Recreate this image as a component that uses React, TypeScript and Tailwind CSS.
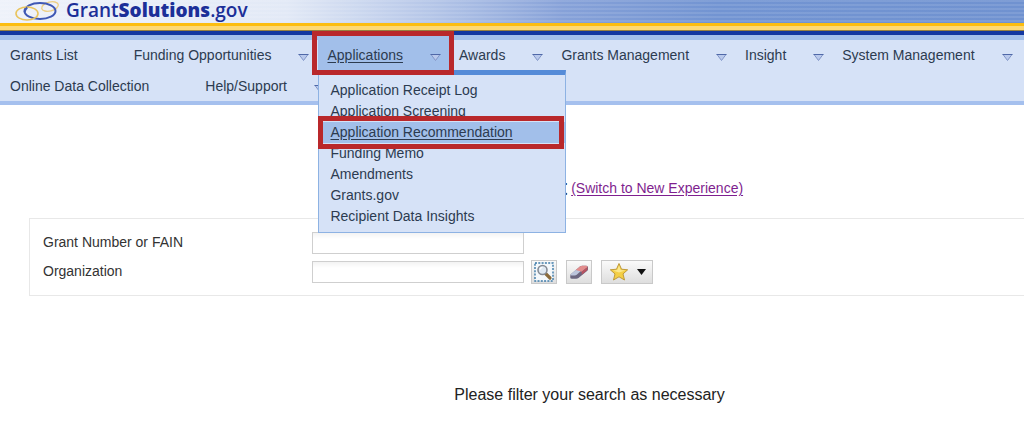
import React from "react";

type MenuItem = { label: string; arrow: boolean };

const MENU: MenuItem[] = [
  { label: "Grants List", arrow: false },
  { label: "Funding Opportunities", arrow: true },
  { label: "Applications", arrow: true },
  { label: "Awards", arrow: true },
  { label: "Grants Management", arrow: true },
  { label: "Insight", arrow: true },
  { label: "System Management", arrow: true },
  { label: "Online Data Collection", arrow: false },
  { label: "Help/Support", arrow: true },
];

const SUBMENU = [
  "Application Receipt Log",
  "Application Screening",
  "Application Recommendation",
  "Funding Memo",
  "Amendments",
  "Grants.gov",
  "Recipient Data Insights",
];

const OPEN_MENU = "Applications";
const ACTIVE_ITEM = "Application Recommendation";

function Logo() {
  return (
    <svg width="46" height="22" viewBox="0 0 46 22" fill="none" aria-hidden="true">
      <ellipse cx="35" cy="6.5" rx="8.5" ry="4.5" stroke="#edcf86" strokeWidth="1.4" transform="rotate(-14 35 6.5)" />
      <ellipse cx="25" cy="11" rx="15.5" ry="8" stroke="#3f58b4" strokeWidth="2" />
      <ellipse cx="12" cy="13.5" rx="11" ry="6.500" stroke="#e9c45e" strokeWidth="1.600" />
      <path d="M9.600 12c.3-1.800 1.200-3.200 2.600-4.500" stroke="#3f58b4" strokeWidth="2" />
    </svg>
  );
}

function Arrow() {
  return (
    <svg width="11" height="9" viewBox="0 0 11 9" aria-hidden="true">
      <path d="M1 1.500h9L5.500 7.500z" fill="#b9c9ec" stroke="#8296c8" />
      <path d="M.5 1.500h10" stroke="#4f68a8" />
    </svg>
  );
}

function LookupIcon() {
  return (
    <svg width="20" height="20" viewBox="0 0 20 20" fill="none" aria-hidden="true">
      <rect x="1" y="1" width="18" height="18" fill="#f4f8fb" stroke="#3b79a8" strokeWidth="1.4" strokeDasharray="2 1.3" />
      <path d="m11.500 11.500 4.500 4.500" stroke="#8a6a3a" strokeWidth="3.200" strokeLinecap="round" />
      <circle cx="8.500" cy="8" r="4.500" fill="#dfe9f3" stroke="#858b94" strokeWidth="1.600" />
      <path d="M6 7.500c.4-1.300 1.300-2 2.500-2.100" stroke="#fff" strokeWidth="1.200" />
    </svg>
  );
}

function EraserIcon() {
  return (
    <svg width="20" height="18" viewBox="0 0 20 18" aria-hidden="true">
      <path d="M1.500 11.500 11 3.500q1-.8 2.300-.8h4q1.700 0 1.700 1.500v2q0 1-1 1.800l-8.500 7q-1 .8-2.300.8H3q-1.800 0-1.800-1.500z" fill="#6b6680" />
      <path d="m1.700 11.200 5-4.200 6 .3-5 4.500q-.8.7-2 .7H2.800q-1.600 0-1.100-1.300z" fill="#bcc5dc" />
      <path d="m6.700 7 4.300-3.500q1-.8 2.300-.8h4q2 .2.900 1.500l-5.500 4.600z" fill="#e28c8c" />
      <path d="m12.700 8.800 5.800-4.900v2.300q0 .9-.8 1.500l-5 4.100z" fill="#b85360" />
    </svg>
  );
}

function StarIcon() {
  return (
    <svg width="20" height="20" viewBox="0 0 20 20" aria-hidden="true">
      <path
        d="m10 1.500 2.500 5.700 6.200.6-4.700 4.100 1.500 6.100L10 14.800 4.500 18 6 11.900 1.300 7.800l6.200-.6z"
        fill="#f4cf45"
        stroke="#c09a3a"
        strokeLinejoin="round"
      />
      <path d="m10 3.500 1.700 4.400 4.600.6-6.300 2-6-2.100 4.200-.5z" fill="#fbe88c" />
    </svg>
  );
}

function SubMenu() {
  return (
    <ul className="absolute left-0 top-full z-10 w-[248px] border border-t-[5px] border-[#8db2e3] border-t-[#558bd8] bg-[#d6e2f7] py-[5px]">
      {SUBMENU.map((label) => {
        const active = label === ACTIVE_ITEM;
        return (
          <li key={label} className="relative">
            <a
              href="#"
              className={
                active
                  ? "block bg-[#a2bfea] pl-[11px] leading-[21px] underline underline-offset-2"
                  : "block pl-[11px] leading-[21px]"
              }
            >
              {label}
            </a>
            {active && (
              <span className="absolute -bottom-1.5 -left-px -top-1.5 right-px z-10 border-[5px] border-[#b9282b] bg-transparent" />
            )}
          </li>
        );
      })}
    </ul>
  );
}

function NavItem({ item }: { item: MenuItem }) {
  const open = item.label === OPEN_MENU;
  return (
    <li className={open ? "relative z-10 bg-[#a2bfea]" : "relative"}>
      <a href="#" className="flex h-[30px] items-center gap-[27px] px-[9px]">
        <span className={open ? "underline underline-offset-2" : ""}>{item.label}</span>
        <span className="flex w-[11px] pt-1">{item.arrow && <Arrow />}</span>
      </a>
      {open && (
        <>
          <SubMenu />
          <span className="pointer-events-none absolute -bottom-[5px] -left-1.5 -right-1 -top-[9px] z-20 border-[5px] border-[#b9282b]" />
        </>
      )}
    </li>
  );
}

const toolButton =
  "flex h-6 items-center justify-center border border-[#c9c9c9] bg-linear-to-b from-[#fafafa] to-[#dedede]";
const textBox =
  "h-[22px] w-[212px] border border-[#cfcfcf] bg-linear-to-b from-[#f3f3f3] to-white to-30% px-1 outline-none";

export default function App() {
  return (
    <div className="overflow-x-hidden bg-white pb-7 font-['Liberation_Sans',Arial,sans-serif] text-sm text-[#333]">
      <header>
        <div className="h-[23px] bg-[repeating-linear-gradient(180deg,rgba(255,255,255,0.1)_0_2px,transparent_2px_4px),linear-gradient(90deg,#eef2fa_0%,#e2e9f6_28%,#b5c6e8_42%,#86a1d8_55%,#7294d2_70%,#7092d0_100%)]">
          <a href="#" className="flex h-[22px] items-center pl-[15px]">
            <Logo />
            <span className="pb-0.5 pl-[5px] font-['Open_Sans','Noto_Sans',sans-serif] text-[19px] font-semibold leading-5 text-[#1c2f98]">
              Grant<b className="font-extrabold">Solutions</b>.gov
            </span>
          </a>
        </div>
        <div className="h-[3px] bg-[#fcbd10]" />
        <div className="h-[5px] border-b border-[#97803f] bg-[#fdd975]" />
        <div className="h-1 bg-[#1237a0]" />
      </header>

      <nav className="border-b-4 border-t-[5px] border-b-[#a5c0ee] border-t-[#a2bfea] bg-[#d6e2f7] text-[#2c3b50]">
        <ul className="flex flex-wrap gap-y-px pl-px">
          {MENU.map((item) => (
            <NavItem key={item.label} item={item} />
          ))}
        </ul>
      </nav>

      <main>
        <div className="flex items-center pl-[528px] pt-[69px]">
          <h1 className="text-[22px] font-bold leading-7 text-[#222]">List</h1>
          <a href="#" className="whitespace-nowrap pl-1 text-[#7f1f8f] underline underline-offset-2">
            (Switch to New Experience)
          </a>
        </div>

        <form className="ml-[29px] mt-4 flex flex-col gap-[5px] border border-r-0 border-[#e8e8e8] pb-[11px] pl-[13px] pt-3">
          <div className="flex h-6 items-center">
            <label htmlFor="grant" className="w-[269px] pb-0.5">Grant Number or FAIN</label>
            <input id="grant" type="text" className={textBox} />
          </div>
          <div className="flex h-6 items-center">
            <label htmlFor="org" className="w-[269px] pb-0.5">Organization</label>
            <input id="org" type="text" className={textBox} />
            <button type="button" aria-label="Look up organization" className={`${toolButton} ml-[7px] w-[26px]`}>
              <LookupIcon />
            </button>
            <button type="button" aria-label="Clear organization" className={`${toolButton} ml-[9px] w-[26px]`}>
              <EraserIcon />
            </button>
            <button type="button" aria-label="Favorites" className={`${toolButton} ml-[9px] w-[52px] gap-2`}>
              <StarIcon />
              <svg width="9" height="6" viewBox="0 0 9 6" aria-hidden="true">
                <path d="M0 0h9L4.500 6z" fill="#111" />
              </svg>
            </button>
          </div>
        </form>

        <p className="pl-[155px] pt-[87px] text-center text-base leading-6 text-[#222]">
          Please filter your search as necessary
        </p>
      </main>
    </div>
  );
}
